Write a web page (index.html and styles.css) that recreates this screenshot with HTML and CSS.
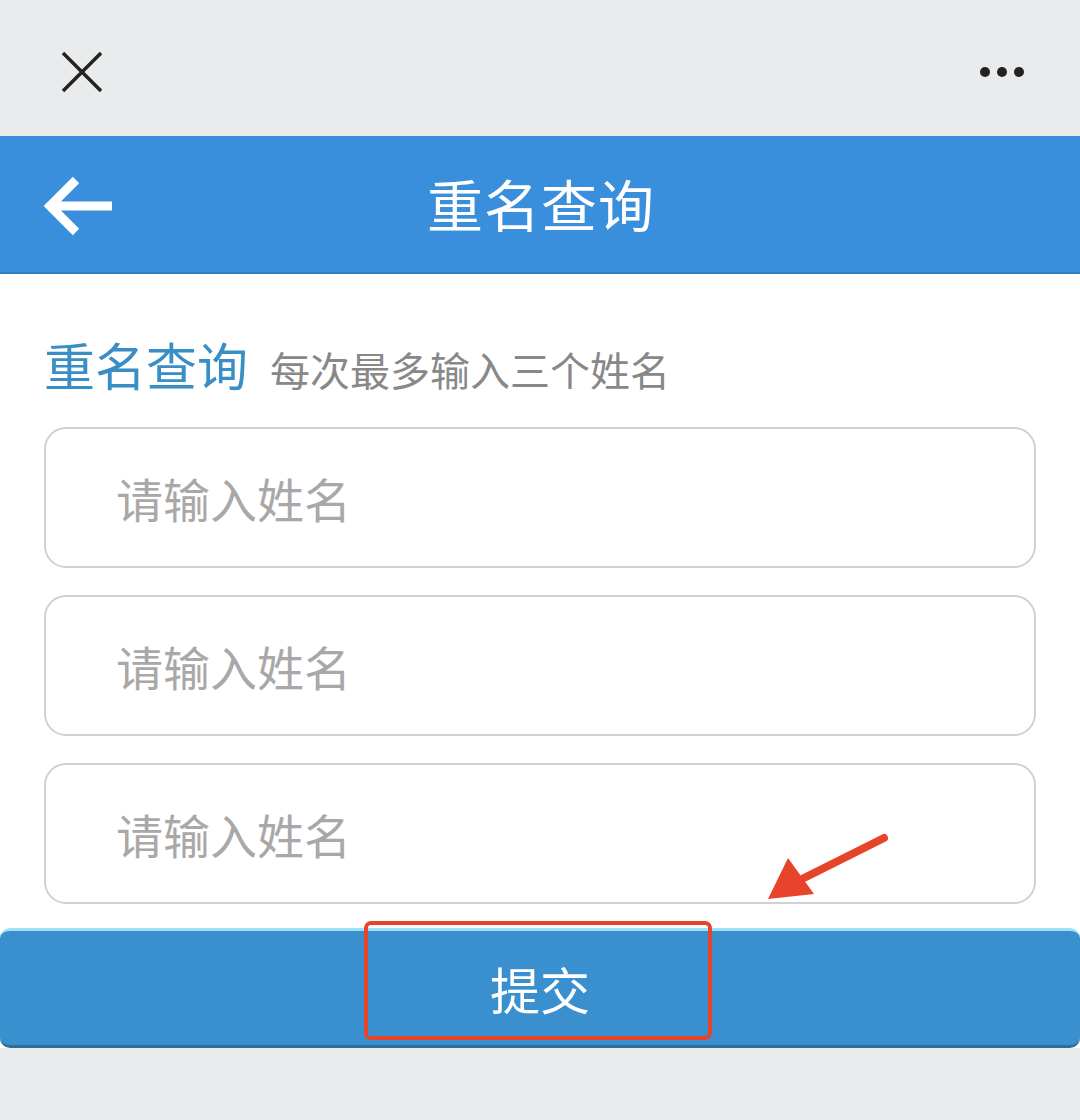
FILE: index.html
```html
<!DOCTYPE html>
<html lang="zh-CN">
<head>
    <meta charset="UTF-8">
    <meta name="viewport" content="width=device-width, initial-scale=1.0">
    <title>重名查询</title>
    <link rel="stylesheet" href="styles.css">
</head>
<body>

    <div class="container-body">

        <div class="top-bar">
            <svg class="icon-close" width="44" height="44" viewBox="0 0 44 44">
                <path d="M3 3 L41 41 M41 3 L3 41" stroke="#222" stroke-width="3.5" fill="none"/>
            </svg>
            <div class="icon-more">
                <span></span><span></span><span></span>
            </div>
        </div>

        <div class="nav-bar">
            <svg class="icon-back" width="72" height="64" viewBox="0 0 72 64">
                <path d="M34 6 L8 32 L34 58 M8 32 L70 32" stroke="#fff" stroke-width="9" fill="none"/>
            </svg>
            <div class="nav-title">重名查询</div>
        </div>

        <div class="content">
            <div class="sec-head">
                <span class="sec-title">重名查询</span>
                <span class="sec-tip">每次最多输入三个姓名</span>
            </div>
            <div class="field">请输入姓名</div>
            <div class="field">请输入姓名</div>
            <div class="field">请输入姓名</div>

            <svg class="mark-arrow" width="130" height="72" viewBox="0 0 130 72">
                <path d="M124 6 L40 48" stroke="#e8432b" stroke-width="8" stroke-linecap="round" fill="none"/>
                <path d="M8 67 L28 26 L54 62 Z" fill="#e8432b"/>
            </svg>
        </div>

        <div class="submit-row">
            <div class="submit-btn">提交</div>
            <div class="mark-box"></div>
        </div>

        <div class="bottom"></div>
    </div>

</body>
</html>
```

FILE: styles.css
```css
:root{
    --colbg: #e9ebec;
    --colblue: #3a8fdc;
    --colbtn: #3a8fcf;
    --colhead: #3a8ec6;
    --colgray: #888;
    --colholder: #a8a8a8;
    --colline: #cfd1d4;
    --colred: #e8432b;
}
*{
    box-sizing: border-box;
}
body{
    margin: 0;
    background: var(--colbg);
    font-family: "Noto Sans CJK SC", "Noto Sans", sans-serif;
}
.container-body{
    width: 1080px;
    height: 1120px;
    display: flex;
    flex-direction: column;
    overflow: hidden;
}
.top-bar{
    height: 136px;
    display: flex;
    justify-content: space-between;
    align-items: center;
    padding: 8px 56px 0 60px;
    background: var(--colbg);
}
.icon-more{
    display: flex;
    gap: 7px;
}
.icon-more span{
    width: 10px;
    height: 10px;
    border-radius: 50%;
    background: #222;
}
.nav-bar{
    height: 138px;
    position: relative;
    display: flex;
    justify-content: center;
    align-items: center;
    background: var(--colblue);
    border-bottom: 2px solid #2f7cc0;
}
.icon-back{
    position: absolute;
    left: 42px;
    top: 38px;
}
.nav-title{
    color: #fff;
    font-size: 56px;
    letter-spacing: 1px;
    padding-left: 2px;
    margin-top: -4px;
}
.content{
    position: relative;
    background: #fff;
    padding: 58px 44px 20px 44px;
    display: flex;
    flex-direction: column;
    gap: 27px;
}
.sec-head{
    display: flex;
    align-items: baseline;
    gap: 22px;
    margin-bottom: 2px;
}
.sec-title{
    color: var(--colhead);
    font-size: 51px;
    line-height: 64px;
}
.sec-tip{
    color: var(--colgray);
    font-size: 40px;
}
.field{
    height: 141px;
    border: 2px solid var(--colline);
    border-radius: 22px;
    display: flex;
    align-items: center;
    padding-left: 70px;
    color: var(--colholder);
    font-size: 47px;
}
.mark-arrow{
    position: absolute;
    left: 760px;
    top: 558px;
}
.submit-row{
    position: relative;
    background: #fff;
    padding-top: 4px;
}
.submit-btn{
    height: 120px;
    display: flex;
    justify-content: center;
    align-items: center;
    background: var(--colbtn);
    border-top: 3px solid #9fe2f5;
    border-bottom: 3px solid #2c6f9c;
    border-radius: 10px;
    color: #fff;
    font-size: 50px;
}
.mark-box{
    position: absolute;
    left: 364px;
    top: -3px;
    width: 348px;
    height: 119px;
    border: 4px solid var(--colred);
    border-radius: 7px;
}
.bottom{
    flex: 1;
    background: var(--colbg);
}
```
